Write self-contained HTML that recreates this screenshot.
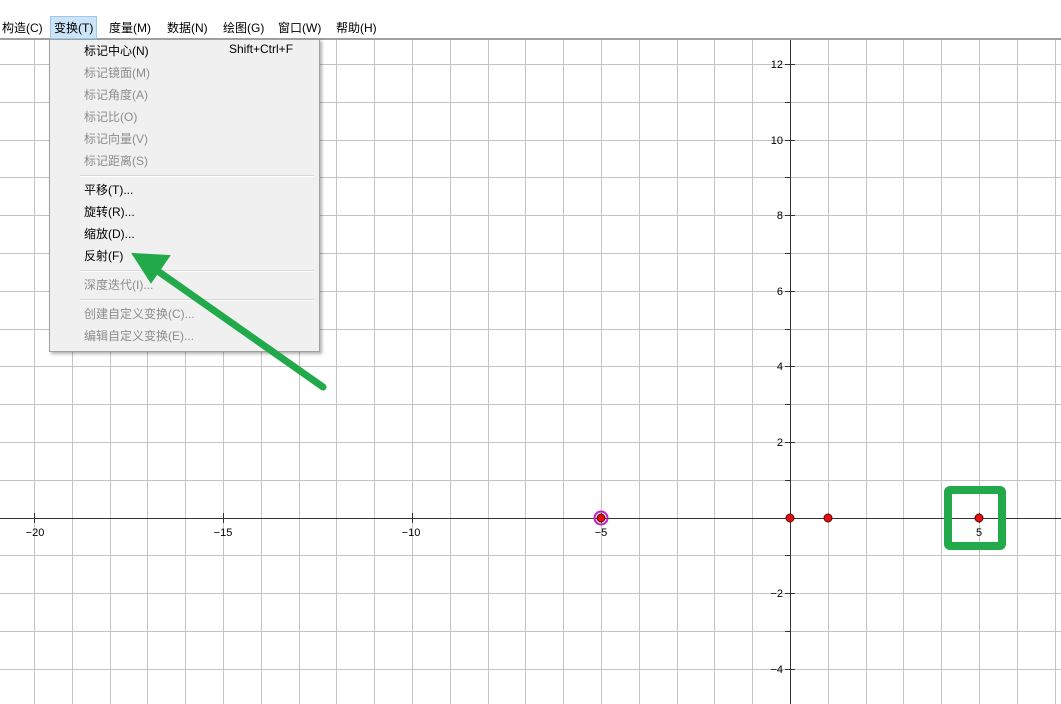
<!DOCTYPE html>
<html><head><meta charset="utf-8"><style>
body{margin:0;width:1061px;height:704px;overflow:hidden;background:#fff;font-family:"Liberation Sans","Noto Sans CJK SC",sans-serif;position:relative}
.mb{position:absolute;left:0;top:0;width:1061px;height:38px;background:#fff;border-bottom:2px solid #a0a0a0;font-size:12px;color:#000}
.mb span{position:absolute;top:19px}
.sel{background:#cce4f7;border:1px solid #99c9ef;padding:2px 3px;top:16px!important}
.menu{position:absolute;left:49px;top:39px;width:269px;height:311px;background:#f0f0f0;border:1px solid #a0a0a0;box-shadow:2px 2px 3px rgba(0,0,0,.3);font-size:12px}
.menu div{position:absolute;left:34px}
.g{color:#8d8d8d}
.sep{position:absolute;left:30px;width:234px;height:1px;background:#d7d7d7;border-bottom:1px solid #fff}
</style></head><body>
<svg width="1061" height="704" style="position:absolute;left:0;top:0" font-family="Liberation Sans" font-size="11">
<g stroke="#c4c4c4">
<path d="M34.5 40V704M72.5 40V704M110.5 40V704M147.5 40V704M185.5 40V704M223.5 40V704M261.5 40V704M299.5 40V704M336.5 40V704M374.5 40V704M412.5 40V704M450.5 40V704M488.5 40V704M525.5 40V704M563.5 40V704M601.5 40V704M639.5 40V704M677.5 40V704M714.5 40V704M752.5 40V704M828.5 40V704M866.5 40V704M903.5 40V704M941.5 40V704M979.5 40V704M1017.5 40V704M1055.5 40V704"/>
<path d="M0 64.5H1061M0 102.5H1061M0 140.5H1061M0 177.5H1061M0 215.5H1061M0 253.5H1061M0 291.5H1061M0 329.5H1061M0 366.5H1061M0 404.5H1061M0 442.5H1061M0 480.5H1061M0 555.5H1061M0 593.5H1061M0 631.5H1061M0 669.5H1061"/>
</g>
<g stroke="#333"><path d="M0 518.5H1061M790.5 40V704"/>
<path d="M785 64.5h10M785 140.5h10M785 215.5h10M785 291.5h10M785 366.5h10M785 442.5h10M785 593.5h10M785 669.5h10M785 102.5h5M785 177.5h5M785 253.5h5M785 329.5h5M785 404.5h5M785 480.5h5M785 555.5h5M785 631.5h5"/>
<path d="M34.5 513v10M223.5 513v10M412.5 513v10M601.5 513v10M979.5 513v10"/></g>
<g fill="#000" text-anchor="end"><text x="783" y="68">12</text><text x="783" y="144">10</text><text x="783" y="219">8</text><text x="783" y="295">6</text><text x="783" y="370">4</text><text x="783" y="446">2</text><text x="783" y="597">−2</text><text x="783" y="673">−4</text></g>
<g fill="#000" text-anchor="middle"><text x="35" y="536">−20</text><text x="223" y="536">−15</text><text x="411" y="536">−10</text><text x="601" y="536">−5</text><text x="979" y="536">5</text></g>
<circle cx="601" cy="518" r="6.5" fill="none" stroke="#c020c0" stroke-width="2"/>
<g fill="#e01010" stroke="#600" stroke-width="1"><circle cx="601" cy="518" r="4"/><circle cx="790" cy="518" r="4"/><circle cx="828" cy="518" r="4"/><circle cx="979" cy="518" r="4"/></g>
<rect x="948" y="490" width="54" height="56" rx="2" fill="none" stroke="#22aa4a" stroke-width="8"/>
</svg>
<div class="mb"><span style="left:2px">构造(C)</span><span class="sel" style="left:50px">变换(T)</span><span style="left:109px">度量(M)</span><span style="left:167px">数据(N)</span><span style="left:223px">绘图(G)</span><span style="left:278px">窗口(W)</span><span style="left:336px">帮助(H)</span></div>
<div class="menu">
<div style="top:2px">标记中心(N)</div><div style="top:2px;left:179px">Shift+Ctrl+F</div>
<div class="g" style="top:24px">标记镜面(M)</div>
<div class="g" style="top:46px">标记角度(A)</div>
<div class="g" style="top:68px">标记比(O)</div>
<div class="g" style="top:90px">标记向量(V)</div>
<div class="g" style="top:112px">标记距离(S)</div>
<span class="sep" style="top:135px"></span>
<div style="top:141px">平移(T)...</div>
<div style="top:163px">旋转(R)...</div>
<div style="top:185px">缩放(D)...</div>
<div style="top:207px">反射(F)</div>
<span class="sep" style="top:230px"></span>
<div class="g" style="top:236px">深度迭代(I)...</div>
<span class="sep" style="top:259px"></span>
<div class="g" style="top:265px">创建自定义变换(C)...</div>
<div class="g" style="top:287px">编辑自定义变换(E)...</div>
</div>
<svg width="1061" height="704" style="position:absolute;left:0;top:0;pointer-events:none"><g fill="#22aa4a" stroke="#22aa4a"><path d="M323 387L152 267" stroke-width="7" stroke-linecap="round"/><path d="M133 254L169 256L151 282Z" stroke-width="2"/></g></svg>
</body></html>
